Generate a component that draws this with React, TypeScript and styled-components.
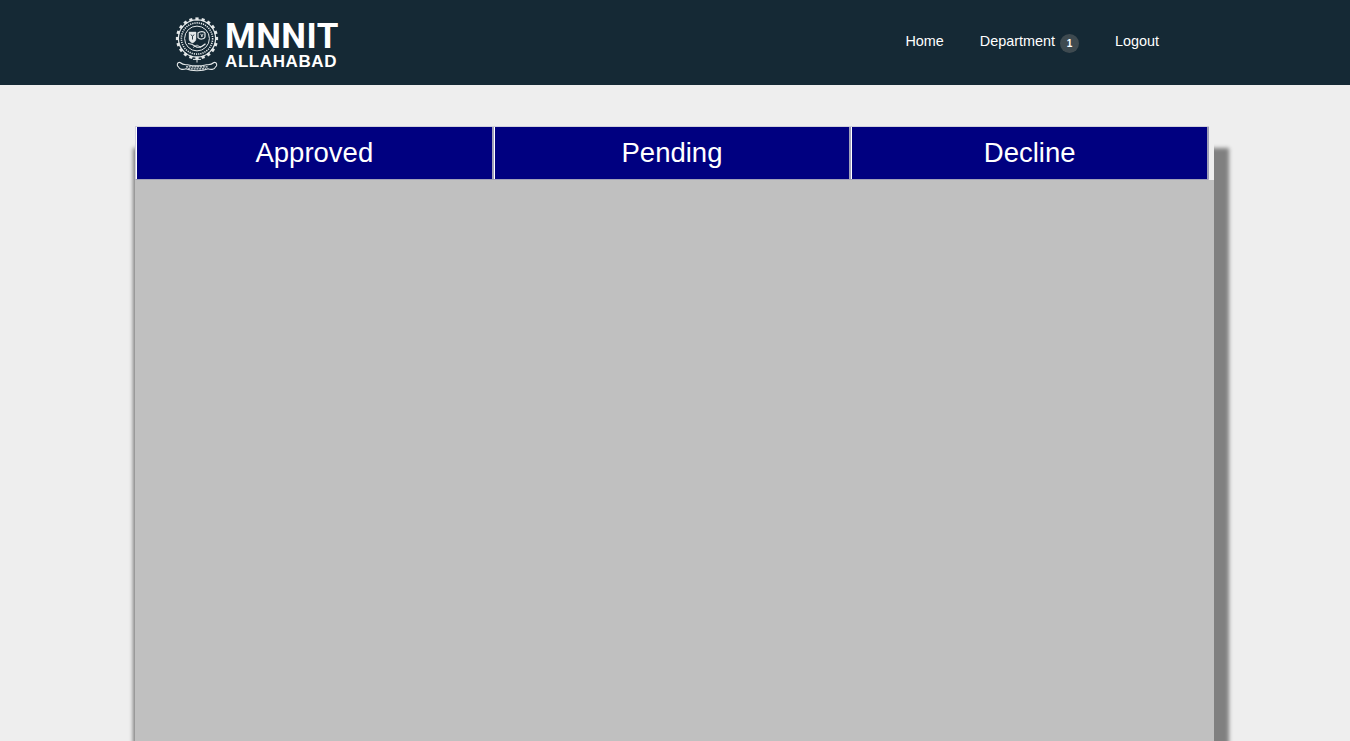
import styled, { createGlobalStyle } from "styled-components";

const GlobalStyle = createGlobalStyle`
  html, body {
    margin: 0;
    padding: 0;
    height: 100%;
    overflow: hidden;
    background: #eeeeee;
    font-family: "Liberation Sans", Arial, sans-serif;
  }
  #root {
    height: 100%;
  }
`;

const teeth = Array.from({ length: 20 }, (_, i) => i * 18);

const Emblem = () => (
  <svg width="44" height="56" viewBox="0 0 44 56" fill="none">
    <g stroke="#e4e8e9">
      {teeth.map((deg) => (
        <rect
          key={deg}
          x="20.4"
          y="0.4"
          width="3.2"
          height="3"
          fill="#e4e8e9"
          stroke="none"
          transform={`rotate(${deg} 22 21.5)`}
        />
      ))}
      <circle cx="22" cy="21.5" r="18.6" strokeWidth="1.2" />
      <circle cx="22" cy="21.5" r="15.6" strokeWidth="1.6" strokeDasharray="1.2 1" />
      <circle cx="22" cy="21.5" r="12.4" strokeWidth="1" />
      <path d="M14 15h7v7c0 2-2 3.400-3.500 4C16 25.400 14 24 14 22z" fill="#e4e8e9" strokeWidth="0.4" />
      <path d="M16 17.500l1.500 2 1.500-2M17.500 19.500v3" stroke="#152935" strokeWidth="0.9" />
      <path d="M23 16c2-1.800 6-1.800 7 0v4c-1 2.400-5 2.800-7 .6z" strokeWidth="1.200" />
      <path d="M25.600 16.800l1.800 3M28.200 16.800l-1.800 3" strokeWidth="0.9" />
      <path d="M13 26.500c4 .2 5.500 1.500 9 3.700 3 .4 6-1 8.500-3.400" strokeWidth="1.200" />
      <path d="M18 30.500l4-2.500 4 2.500" strokeWidth="0.8" />
      <path
        d="M5 45.500c-3-.8-3.600 3.500-1.400 4.600 1 2.800 5 2.600 7.400 1.700 3.200 1.500 7 1.900 11 1.900s7.800-.4 11-1.900c2.400.9 6.400 1.100 7.400-1.700 2.200-1.100 1.600-5.400-1.400-4.600-2 1.800-4.500 2.600-7.400 2.200-6 1.500-13.200 1.500-19.200 0-2.900.4-5.400-.4-7.400-2.200z"
        strokeWidth="1.100"
      />
      <path d="M11 49.800h22M13 51.800h18" strokeWidth="1.200" strokeDasharray="2 .8" />
      <path d="M22 41v4.500M18 42.400l8 0" strokeWidth="1" />
    </g>
  </svg>
);

const App = () => {
  return (
    <>
      <GlobalStyle />
      <Header>
        <Logo>
          <Emblem />
          <LogoText>
            <LogoTitle>MNNIT</LogoTitle>
            <LogoCity>ALLAHABAD</LogoCity>
          </LogoText>
        </Logo>
        <Nav>
          <NavItem>Home</NavItem>
          <NavItem>
            Department <Badge>1</Badge>
          </NavItem>
          <NavItem>Logout</NavItem>
        </Nav>
      </Header>
      <Panel>
        <Tabs>
          <Tab>Approved</Tab>
          <Tab>Pending</Tab>
          <Tab>Decline</Tab>
        </Tabs>
        <PanelBody />
      </Panel>
    </>
  );
};

const Header = styled.header`
  height: 85px;
  background: #152935;
  display: flex;
  align-items: flex-start;
  justify-content: space-between;
  padding: 0 191px 0 175px;
  box-sizing: border-box;
`;

const Logo = styled.div`
  display: flex;
  align-items: flex-start;
  gap: 6px;
  padding-top: 17px;
`;

const LogoText = styled.div`
  display: flex;
  flex-direction: column;
  padding-top: 3px;
  color: #ffffff;
`;

const LogoTitle = styled.div`
  font-family: Roboto, "Liberation Sans", sans-serif;
  font-size: 35px;
  font-weight: 700;
  line-height: 33px;
  letter-spacing: 0.5px;
`;

const LogoCity = styled.div`
  font-family: "Liberation Sans", Arial, sans-serif;
  font-size: 17px;
  font-weight: 700;
  line-height: 18px;
  letter-spacing: 0.6px;
`;

const Nav = styled.nav`
  display: flex;
  gap: 36px;
  padding-top: 33px;
`;

const NavItem = styled.a`
  color: #ffffff;
  font-size: 14.4px;
  line-height: 16px;
  cursor: pointer;
`;

const Badge = styled.span`
  display: inline-block;
  width: 19px;
  height: 19px;
  margin-left: 1px;
  border-radius: 50%;
  background: #3e4a50;
  color: #ffffff;
  font-size: 10px;
  font-weight: 700;
  line-height: 19px;
  text-align: center;
  vertical-align: -1px;
`;

const Panel = styled.main`
  width: 1079px;
  height: 800px;
  margin: 53px 0 0 135px;
  display: flex;
  flex-direction: column;
  box-shadow: 15px 10px 4px #808080, -2px 10px 4px #808080;
`;

const Tabs = styled.div`
  width: 1074px;
  height: 54px;
  margin-top: -12px;
  box-sizing: border-box;
  display: grid;
  grid-template-columns: repeat(3, 1fr);
  gap: 3px;
  padding: 0 1px;
  background: #ffffff;
  border: 1px solid #d0d0dc;
  border-bottom-color: #a0a0b8;
`;

const Tab = styled.div`
  background: #000080;
  color: #ffffff;
  font-size: 27.5px;
  text-align: center;
  line-height: 52px;
  box-shadow: 2px 0 0 #a0a0b8;
`;

const PanelBody = styled.div`
  flex: 1;
  background: #c0c0c0;
`;

export default App;
